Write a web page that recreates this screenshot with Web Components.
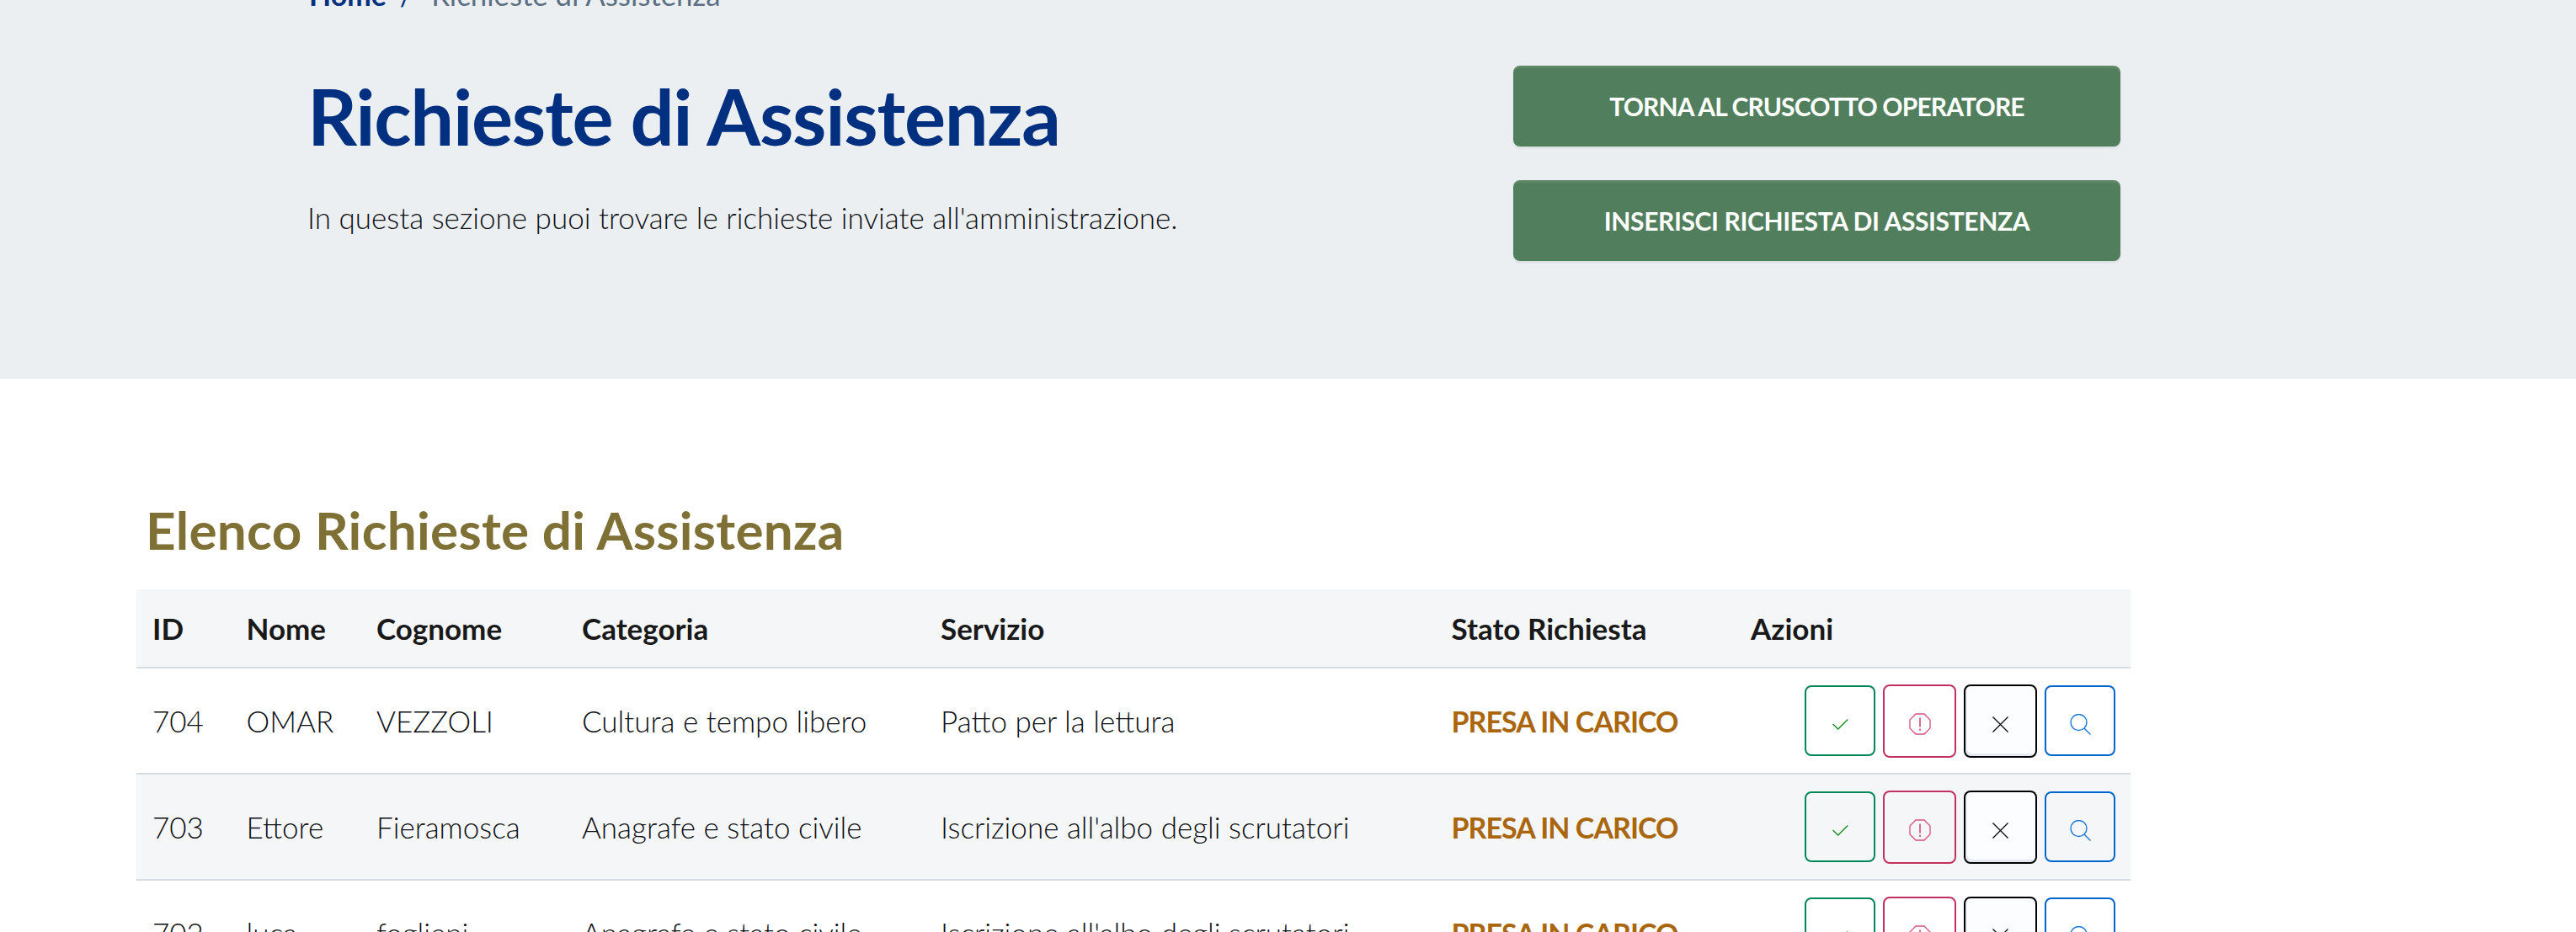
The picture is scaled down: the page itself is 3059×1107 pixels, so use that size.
<!doctype html>
<html lang="it">
<head>
<meta charset="utf-8">
<title>Richieste di Assistenza</title>
<style>
html, body { margin: 0; height: 1107px; overflow: hidden; background: #fff; }
body { font-family: Lato, "Noto Sans", sans-serif; color: #19191a; }
</style>
</head>
<body>
<page-hero>
  <bread-crumb slot="crumb" current="Richieste di Assistenza"></bread-crumb>
  <span slot="title">Richieste di Assistenza</span>
  <span slot="lead">In questa sezione puoi trovare le richieste inviate all'amministrazione.</span>
  <hero-button slot="actions">TORNA AL CRUSCOTTO OPERATORE</hero-button>
  <hero-button slot="actions" style="--ls:-0.37px">INSERISCI RICHIESTA DI ASSISTENZA</hero-button>
</page-hero>
<request-list heading="Elenco Richieste di Assistenza">
  <request-row head>
    <request-cell>ID</request-cell><request-cell>Nome</request-cell><request-cell>Cognome</request-cell>
    <request-cell>Categoria</request-cell><request-cell>Servizio</request-cell>
    <request-cell>Stato Richiesta</request-cell><request-cell>Azioni</request-cell>
  </request-row>
  <request-row>
    <request-cell>704</request-cell><request-cell>OMAR</request-cell><request-cell>VEZZOLI</request-cell>
    <request-cell>Cultura e tempo libero</request-cell><request-cell>Patto per la lettura</request-cell>
    <request-cell status>PRESA IN CARICO</request-cell><row-actions></row-actions>
  </request-row>
  <request-row alt>
    <request-cell>703</request-cell><request-cell>Ettore</request-cell><request-cell>Fieramosca</request-cell>
    <request-cell>Anagrafe e stato civile</request-cell><request-cell>Iscrizione all'albo degli scrutatori</request-cell>
    <request-cell status>PRESA IN CARICO</request-cell><row-actions></row-actions>
  </request-row>
  <request-row>
    <request-cell>702</request-cell><request-cell>luca</request-cell><request-cell>foglieni</request-cell>
    <request-cell>Anagrafe e stato civile</request-cell><request-cell>Iscrizione all'albo degli scrutatori</request-cell>
    <request-cell status>PRESA IN CARICO</request-cell><row-actions></row-actions>
  </request-row>
</request-list>
<script>
"use strict";
function makeTemplate(html) {
    const t = document.createElement('template');
    t.innerHTML = html;
    return t.content;
}
class Base extends HTMLElement {
    constructor() {
        super();
        this.attachShadow({ mode: 'open' });
        this.shadowRoot.appendChild(this.constructor._template.cloneNode(true));
    }
}
class PageHero extends Base {}
PageHero._template = makeTemplate(`
  <style>
  :host { display: flex; justify-content: space-between; height: 450px; box-sizing: border-box;
          padding: 0 541px 0 365px; background: #ebeff2; overflow: hidden; }
  .text { display: flex; flex-direction: column; }
  h1 { margin: 74px 0 0; font-size: 92px; line-height: 100px; font-weight: 700; letter-spacing: -1.3px; color: #00307f; white-space: nowrap; }
  p { margin: 45px 0 0; font-size: 35px; line-height: 50px; font-weight: 300; color: #0d1014; white-space: nowrap; }
  .buttons { display: flex; flex-direction: column; gap: 40px; padding-top: 78px; }
  </style>
  <div class="text">
    <slot name="crumb"></slot>
    <h1><slot name="title"></slot></h1>
    <p><slot name="lead"></slot></p>
  </div>
  <div class="buttons"><slot name="actions"></slot></div>
`);
class BreadCrumb extends Base {
    connectedCallback() {
        this.shadowRoot.getElementById('cur').textContent = this.getAttribute('current');
    }
}
BreadCrumb._template = makeTemplate(`
  <style>
  :host { display: block; margin-top: -26px; height: 40px; font-size: 34px; line-height: 40px; white-space: nowrap; }
  a { color: #00307f; font-weight: 700; text-decoration: none; margin-left: 2px; }
  .sep { color: #00307f; margin: 0 22px 0 16px; }
  .cur { color: #5c6f82; font-size: 34.8px; }
  </style>
  <a href="#">Home</a><span class="sep">/</span><span class="cur" id="cur"></span>
`);
class HeroButton extends Base {}
HeroButton._template = makeTemplate(`
  <style>
  :host { display: flex; align-items: center; justify-content: center; width: 721px; height: 96px;
          border-radius: 8px; background: #517e5c; color: #fff; font-size: 30px; font-weight: 700;
          letter-spacing: var(--ls, -0.85px); white-space: nowrap;
          box-shadow: inset 0 3px 0 rgba(255,255,255,.08), 0 2px 3px rgba(0,0,0,.08); }
  </style>
  <slot></slot>
`);
class RequestList extends Base {
    connectedCallback() {
        this.shadowRoot.querySelector('h2').textContent = this.getAttribute('heading');
    }
}
RequestList._template = makeTemplate(`
  <style>
  :host { display: block; padding: 144px 529px 0 162px; }
  h2 { margin: 0 0 36px; padding-left: 11px; font-size: 62px; line-height: 70px; font-weight: 700; letter-spacing: 0.27px; color: #7f7136; white-space: nowrap; }
  </style>
  <h2></h2>
  <slot></slot>
`);
class RequestRow extends Base {}
RequestRow._template = makeTemplate(`
  <style>
  :host { display: grid; grid-template-columns: 111.5px 154.5px 244px 426px 606.5px 355.5px 470px;
          align-items: center; box-sizing: border-box; height: 126px; border-bottom: 2px solid #d5dae3;
          font-size: 35px; font-weight: 300; color: #0d1014; white-space: nowrap; }
  :host([head]) { height: 94px; font-weight: 700; color: #19191a; background: #f5f6f8; }
  :host([alt]) { background: #f5f6f8; }
  </style>
  <slot></slot>
`);
class RequestCell extends Base {}
RequestCell._template = makeTemplate(`
  <style>
  :host { display: block; padding-left: 19px; }
  :host([status]) { font-size: 34px; font-weight: 700; color: #a9660d; letter-spacing: -0.95px; }
  </style>
  <slot></slot>
`);
class RowActions extends Base {}
RowActions._template = makeTemplate(`
  <style>
  :host { display: flex; justify-content: flex-end; align-items: center; gap: 9px; padding-right: 18px; }
  </style>
  <action-button kind="ok"></action-button>
  <action-button kind="warn"></action-button>
  <action-button kind="close"></action-button>
  <action-button kind="search"></action-button>
`);
class ActionButton extends Base {
    static get observedAttributes() {
        return ['kind'];
    }
    attributeChangedCallback(name, oldValue, newValue) {
        this.shadowRoot.getElementById('icon').innerHTML = ActionButton._icons[newValue] || '';
    }
}
ActionButton._icons = {
    ok: '<svg width="19" height="13" viewBox="0 0 19 13" fill="none" stroke="#128a1a" stroke-width="1.3"><path d="M.5 6l6.2 6L18.3.5"/></svg>',
    warn: '<svg width="26" height="26" viewBox="0 0 26 26" fill="none" stroke="#d9527f" stroke-width="1.3"><path d="M8 1h10l7 7v10l-7 7H8l-7-7V8z"/><path d="M13 5.5v11M13 18.5v2.6" stroke-width="1.7"/></svg>',
    close: '<svg width="19" height="19" viewBox="0 0 19 19" fill="none" stroke="#111" stroke-width="1.4"><path d="M.5.5l18 18M18.5.5l-18 18"/></svg>',
    search: '<svg width="25" height="25" viewBox="0 0 25 25" fill="none" stroke="#1e78d8" stroke-width="1.4"><circle cx="10.5" cy="10" r="9.5"/><path d="M17 17l7.5 7.5"/></svg>',
};
ActionButton._template = makeTemplate(`
  <style>
  :host { display: flex; align-items: center; justify-content: center; box-sizing: border-box;
          width: 84px; height: 84px; padding-top: 8px; border: 2px solid #000; border-radius: 8px; }
  :host([kind="ok"]) { border-color: #008758; }
  :host([kind="warn"]) { width: 87px; height: 87px; border-color: #c2305f; }
  :host([kind="close"]) { width: 87px; height: 87px; border-color: #000; background: #fcfdff;
          box-shadow: inset 2px -3px 0 #e6e9f2; }
  :host([kind="search"]) { border-color: #0066cc; }
  svg { display: block; }
  </style>
  <span id="icon" style="display:block"></span>
`);
customElements.define('action-button', ActionButton);
customElements.define('row-actions', RowActions);
customElements.define('request-cell', RequestCell);
customElements.define('request-row', RequestRow);
customElements.define('request-list', RequestList);
customElements.define('hero-button', HeroButton);
customElements.define('bread-crumb', BreadCrumb);
customElements.define('page-hero', PageHero);
</script>
</body>
</html>
